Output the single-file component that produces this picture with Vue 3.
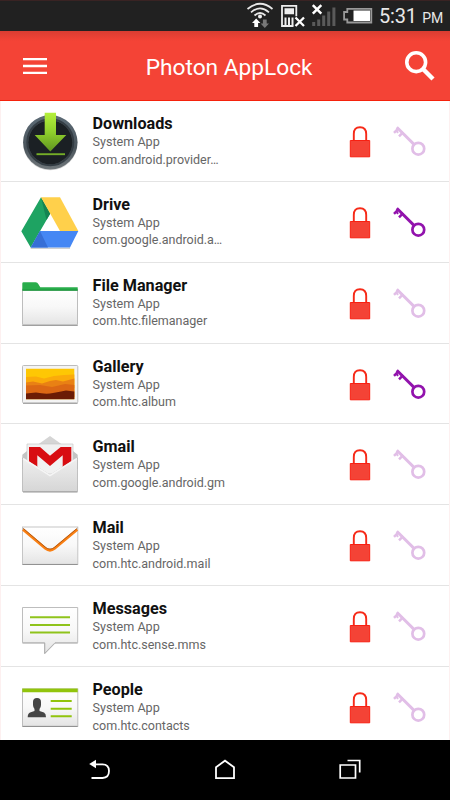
<script setup>
const apps = [
  { id: 'downloads', name: 'Downloads', pkg: 'com.android.provider…', on: false },
  { id: 'drive', name: 'Drive', pkg: 'com.google.android.a…', on: true },
  { id: 'files', name: 'File Manager', pkg: 'com.htc.filemanager', on: false },
  { id: 'gallery', name: 'Gallery', pkg: 'com.htc.album', on: true },
  { id: 'gmail', name: 'Gmail', pkg: 'com.google.android.gm', on: false },
  { id: 'mail', name: 'Mail', pkg: 'com.htc.android.mail', on: false },
  { id: 'messages', name: 'Messages', pkg: 'com.htc.sense.mms', on: false },
  { id: 'people', name: 'People', pkg: 'com.htc.contacts', on: false },
]
</script>

<template>
  <div class="screen">
    <svg class="defs" width="0" height="0">
      <defs>
        <linearGradient id="paper" x1="0" y1="0" x2="0" y2="1"><stop offset="0" stop-color="#fff" /><stop offset=".5" stop-color="#f8f8f8" /><stop offset="1" stop-color="#e4e4e4" /></linearGradient>
        <linearGradient id="lime" x1="0" y1="0" x2="0" y2="1"><stop offset="0" stop-color="#b5f03c" /><stop offset=".5" stop-color="#8fcf2c" /><stop offset="1" stop-color="#5f9420" /></linearGradient>
        <linearGradient id="ring" x1="0" y1="0" x2="0" y2="1"><stop offset="0" stop-color="#5c6b76" /><stop offset=".6" stop-color="#4b555c" /><stop offset="1" stop-color="#70777b" /></linearGradient>
        <linearGradient id="env" x1="0" y1="0" x2="0" y2="1"><stop offset="0" stop-color="#efefef" /><stop offset="1" stop-color="#d6d6d6" /></linearGradient>
      </defs>
    </svg>

    <div class="status">
      <svg class="status-icons" width="134" height="31" viewBox="0 0 134 31">
        <g fill="none" stroke="#e8e8e8" stroke-width="1.7">
          <path d="M1.500 9Q14-1.500 26.500 9M5 12.300Q14 4.500 23 12.300M8.500 15.500Q14 10.500 19.500 15.500" />
        </g>
        <circle cx="14" cy="16.500" r="2" fill="#eee" />
        <path d="M10.200 18.500l-4.200 4.500h2.300v4h3.800v-4h2.300z" fill="#fff" />
        <path d="M18.800 28l-4.200-4.500h2.300v-4h3.800v4h2.300z" fill="#777" />
        <path d="M36 5.800h14.300v10.500M36 5v21h11.500" fill="none" stroke="#eee" stroke-width="1.800" />
        <path d="M38.500 8.200h9.500v6h-9.500zM38.500 17.500h2v8h-2zM42 17.500h2v8h-2zM45.500 17.500h2v8h-2z" fill="#eee" />
        <path d="M49.500 17.500l8.500 8.500M58 17.500l-8.500 8.500" stroke="#fff" stroke-width="2.300" />
        <path d="M66.200 22h3v4h-3zM71.200 19.500h3v6.500h-3zM76.200 15.500h3v10.500h-3zM81.200 11.500h3v14.500h-3zM86.400 7.500h3v18.500h-3z" fill="#5a5a5a" />
        <path d="M66.800 5.200l8.500 8.500M75.300 5.200l-8.500 8.500" stroke="#fff" stroke-width="2.500" />
        <path d="M101.300 8.900h24v13.600h-24v-3h-3.200v-7.500h3.200z" fill="none" stroke="#999" stroke-width="1.800" />
        <path d="M107.500 10.500h16.500v10.500h-16.500z" fill="#fff" />
      </svg>
      <span class="time">5:31</span><span class="pm">PM</span>
    </div>

    <header class="bar">
      <svg width="24" height="18" viewBox="0 0 24 18"><path d="M0 2.200h24M0 9h24M0 15.800h24" stroke="#fff" stroke-width="2.300" /></svg>
      <h1>Photon AppLock</h1>
      <svg width="32" height="32" viewBox="0 0 32 32"><circle cx="12.200" cy="12.200" r="9.400" fill="none" stroke="#fff" stroke-width="3.600" /><path d="M18.500 18.500l10.500 10.500" stroke="#fff" stroke-width="4.400" /></svg>
    </header>

    <main class="list">
      <section v-for="a in apps" :key="a.id" class="row">
        <svg class="app" width="60" height="79" viewBox="0 0 60 79">
          <g v-if="a.id === 'downloads'">
            <circle cx="30.300" cy="42" r="27.300" fill="#bbb" opacity=".6" />
            <circle cx="30.300" cy="41.300" r="27.200" fill="url(#ring)" />
            <circle cx="30.300" cy="41.300" r="23" fill="none" stroke="#343d44" stroke-width="2" />
            <circle cx="30.300" cy="41.300" r="22" fill="#1b2024" />
            <path d="M24.700 11.700H36V34H46.300L30.300 50.500L14.700 34H24.700Z" fill="url(#lime)" />
            <path d="M16.500 53.200H45" stroke="#75ad27" stroke-width="1.900" />
          </g>
          <g v-else-if="a.id === 'drive'">
            <path d="M10.700 66.200H50" stroke="#bbb" stroke-width="1" />
            <path d="M21 15.200L30.300 31.500L20 49.200L10.700 65.500L1.300 49.200Z" fill="#1ea362" />
            <path d="M21 15.200L30.300 31.500L26.500 38Z" fill="#148452" />
            <path d="M21 15.200H40L58.300 49H40Z" fill="#ffd04b" />
            <path d="M20 49H58.300L50 65.500H10.700Z" fill="#4587f4" />
            <path d="M20 49L28 65.500H10.700Z" fill="#376fd6" />
          </g>
          <g v-else-if="a.id === 'files'">
            <path d="M2.300 62.500H57.700" stroke="#999" stroke-width="1" />
            <path d="M2.500 26H57.500V61.700H2.500Z" fill="url(#paper)" stroke="#bdbdbd" />
            <path d="M2.300 27.500V20.500Q2.300 19.200 3.500 19.200H15.700Q17.500 19.200 18.300 21L20.300 24.200H57.700V27.500Z" fill="#29ad4b" />
            <path d="M2.500 27.200H57.700" stroke="#168b35" />
          </g>
          <g v-else-if="a.id === 'gallery'">
            <path d="M3 59.300H57.500" stroke="#888" stroke-width="1" />
            <rect x="2.500" y="21.500" width="55.300" height="37.300" rx="1" fill="#f4f4f4" stroke="#bcbcbc" />
            <path d="M6 24.800H54.300V55.200H6Z" fill="#fec704" />
            <path d="M6 33L16 32.500L24 34.500L34 32L44 31L54.300 30.500V44H6Z" fill="#fbab0a" />
            <path d="M6 38.500L13 37.500L22 39.500L30 37L36 36L43 37.500L54.300 34.500V55H6Z" fill="#e98114" />
            <path d="M6 41.500L20 41L32 43L45 40L54.300 41V53H6Z" fill="#dc6814" />
            <path d="M6 49.500L16 48.500Q26 50.500 33 49T46 46.500L54.300 47.500V55.200H6Z" fill="#6b1c05" />
          </g>
          <g v-else-if="a.id === 'gmail'">
            <path d="M2.300 34V30.700L7 27V45H2.300ZM57.700 34V30.700L53 27V45H57.700Z" fill="#c4c4c4" />
            <path d="M18 20.500L30 11.900L42 20.500Z" fill="#d5d5d5" />
            <path d="M7 20H53V50H7Z" fill="#f1f1f1" stroke="#c8c8c8" stroke-width=".7" />
            <path d="M9 23H20L30 31.700L40.700 23H51.300V46H42.700V31.300L30 42L17.300 31.300V46H9Z" fill="#d80d12" />
            <path d="M2.500 34L30 51L57.500 34V67.500H2.500Z" fill="url(#env)" stroke="#b4b4b4" stroke-width=".8" />
            <path d="M3 34.500L30 51.500L57 34.500" stroke="#f5f5f5" stroke-width="1.500" fill="none" />
            <path d="M3 68H57.500" stroke="#999" />
          </g>
          <g v-else-if="a.id === 'mail'">
            <rect x="2.500" y="22" width="55.300" height="37.300" fill="url(#paper)" stroke="#c5c5c5" />
            <path d="M2.500 59.500H57.700" stroke="#929292" />
            <path d="M3 24.500L25.500 43.500Q30 47 34.500 43.500L57.300 24.500" fill="none" stroke="#f97f12" stroke-width="2.800" />
            <path d="M3 23.200L25.500 42.300Q30 45.800 34.500 42.300L57.300 23.200" fill="none" stroke="#984911" stroke-width=".7" />
          </g>
          <g v-else-if="a.id === 'messages'">
            <path d="M2.500 21.500H57.700V56.700H35L24.700 67.300V56.700H2.500Z" fill="url(#paper)" stroke="#bdbdbd" />
            <path d="M2.500 57.200H24.700V67.800L35 57.200H57.700" fill="none" stroke="#a5a5a5" stroke-width=".7" />
            <path d="M10 31.300H50M10 39H50M10 46.500H50" stroke="#8fc31b" stroke-width="2" />
          </g>
          <g v-else>
            <rect x="2.500" y="22" width="55.300" height="37.200" fill="url(#paper)" stroke="#bdbdbd" />
            <path d="M2.500 59.500H57.700" stroke="#929292" />
            <path d="M2.300 21.500H57.700V25.300H2.300Z" fill="#91c40c" />
            <path d="M30.700 34H51.700M30.700 41.700H51.700M30.700 49.200H51.700" stroke="#91c40c" stroke-width="2" />
            <path d="M13 35Q13 31 17 31T21 35V38Q21 40 19.500 42V44L24 45.500Q26 46.500 26 50.200H7.700Q7.700 46.500 10 45.500L14.500 44V42Q13 40 13 38Z" fill="#454545" />
          </g>
        </svg>
        <div class="text">
          <div class="name">{{ a.name }}</div>
          <div class="kind">System App</div>
          <div class="kind pkg">{{ a.pkg }}</div>
        </div>
        <svg class="lock" width="22" height="34" viewBox="0 0 22 34">
          <path d="M4.800 17V9Q4.800 2.200 11 2.200T17.200 9V17" fill="none" stroke="#f62a18" stroke-width="1.900" />
          <path d="M1.300 15.500H20.700V31.800H1.300Z" fill="#f44336" stroke="#f82012" />
        </svg>
        <svg class="key" :class="{ on: a.on }" width="34" height="32" viewBox="0 0 34 32" fill="none" stroke="currentColor">
          <circle cx="25.300" cy="22.700" r="5.900" stroke-width="2.700" />
          <path d="M3.800 1.200L21 18.400" stroke-width="2.900" />
          <path d="M5.600 2.200L1 6.800M10.200 6.200L6 10.400" stroke-width="2.500" />
          <path d="M3 4.600L5.200 6.800" stroke-width="2" />
        </svg>
      </section>
    </main>

    <nav class="nav">
      <svg width="22" height="22" viewBox="0 0 22 22"><path d="M5 5.300H13.500Q20 5.300 20 12T13.500 19H2.500" fill="none" stroke="#fff" stroke-width="1.800" /><path d="M.2 5L7 .8V9.200Z" fill="#fff" /></svg>
      <svg width="22" height="22" viewBox="0 0 22 22"><path d="M2 8.200L11 1.700L20 8.200V19.200H2Z" fill="none" stroke="#fff" stroke-width="1.800" /></svg>
      <svg width="22" height="22" viewBox="0 0 22 22"><path d="M1.200 6H16.500V19H1.200ZM8.500 1.500H20.700V13.500" fill="none" stroke="#fff" stroke-width="1.700" /></svg>
    </nav>
  </div>
</template>

<style>
body { margin: 0; overflow: hidden; }
</style>
<style scoped>
.screen { width: 450px; height: 800px; display: flex; flex-direction: column; background: #fff; font-family: Roboto, "Liberation Sans", sans-serif; overflow: hidden; }
.defs { display: block; flex: none; }
.status { height: 31px; flex: none; box-sizing: border-box; background: #212121; border-top: 1px solid #392323; color: #e8e8e8; display: flex; align-items: baseline; padding-left: 246px; }
.status-icons { align-self: flex-start; margin-top: -1px; flex: none; }
.time { font-size: 20px; line-height: 31px; margin-left: -1px; letter-spacing: -.2px; }
.pm { font-size: 14px; margin-left: 5.5px; }
.bar { height: 70px; flex: none; box-sizing: border-box; display: flex; align-items: center; padding: 0 14px 0 23px; background: linear-gradient(#d93d32, #f44336 10px); border-bottom: 1px solid #f5220c; }
.bar h1 { flex: 1; margin: 5px 0 0; padding-left: 98.7px; font-size: 22.7px; line-height: 30px; font-weight: 400; color: #fff; white-space: nowrap; }
.list { height: 639px; flex: none; overflow: hidden; box-sizing: border-box; border: solid #fdf0f0; border-width: 0 1px; }
.row { height: 80.86px; box-sizing: border-box; border-bottom: 1px solid #e4e4e4; display: flex; align-items: flex-start; padding-left: 19px; }
.app { flex: none; }
.text { width: 269px; flex: none; box-sizing: border-box; padding: 13px 0 0 12.5px; white-space: nowrap; }
.name { font-size: 16.2px; line-height: 19px; font-weight: 700; color: #111; }
.kind { font-size: 12.6px; line-height: 17.500px; color: #666; }
.pkg { font-size: 12.500px; }
.lock { margin-top: 24px; flex: none; }
.key { margin: 25px 0 0 22px; color: #e1bee7; flex: none; }
.key.on { color: #9213ad; }
.nav { height: 60px; flex: none; background: #000; display: flex; align-items: center; justify-content: center; gap: 103px; }
</style>
